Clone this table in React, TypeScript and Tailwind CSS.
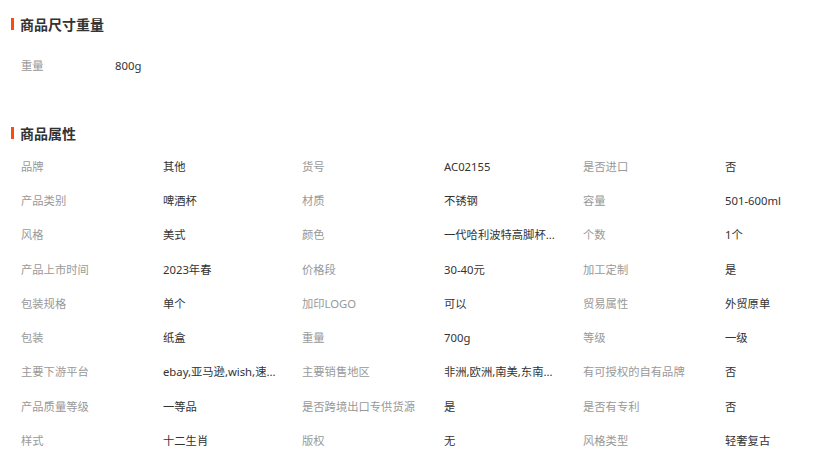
const font = { fontFamily: '"Noto Sans", "Noto Sans CJK SC", sans-serif' };

const attrs: [string, string][] = [
  ['品牌', '其他'],
  ['货号', 'AC02155'],
  ['是否进口', '否'],
  ['产品类别', '啤酒杯'],
  ['材质', '不锈钢'],
  ['容量', '501-600ml'],
  ['风格', '美式'],
  ['颜色', '一代哈利波特高脚杯...'],
  ['个数', '1个'],
  ['产品上市时间', '2023年春'],
  ['价格段', '30-40元'],
  ['加工定制', '是'],
  ['包装规格', '单个'],
  ['加印LOGO', '可以'],
  ['贸易属性', '外贸原单'],
  ['包装', '纸盒'],
  ['重量', '700g'],
  ['等级', '一级'],
  ['主要下游平台', 'ebay,亚马逊,wish,速...'],
  ['主要销售地区', '非洲,欧洲,南美,东南...'],
  ['有可授权的自有品牌', '否'],
  ['产品质量等级', '一等品'],
  ['是否跨境出口专供货源', '是'],
  ['是否有专利', '否'],
  ['样式', '十二生肖'],
  ['版权', '无'],
  ['风格类型', '轻奢复古'],
];

function SectionTitle({ title }: { title: string }) {
  return (
    <div className="flex items-center h-[20px]">
      <span className="ml-[11px] w-[3px] h-[12px] bg-[#ff4a0d]" />
      <h3 className="ml-[6px] text-[14px] font-bold text-[#333]">{title}</h3>
    </div>
  );
}

export default function App() {
  return (
    <div className="w-[840px] h-[458px] overflow-hidden bg-white text-[11.3px]" style={font}>
      <div className="pt-[14px]">
        <SectionTitle title="商品尺寸重量" />
        <div className="mt-[15px] ml-[21px] flex items-center h-[34px]">
          <span className="w-[94px] text-[#999]">重量</span>
          <span className="text-[#333]">800g</span>
        </div>
      </div>
      <div className="mt-[40px]">
        <SectionTitle title="商品属性" />
        <div className="mt-[7px] ml-[21px] grid grid-cols-[142px_139px_142px_139px_142px_94px]">
          {attrs.map(([label, value]) => (
            <div key={label} className="contents">
              <div className="h-[34.3px] flex items-center text-[#999] whitespace-nowrap">{label}</div>
              <div className="h-[34.3px] flex items-center text-[#333] whitespace-nowrap">{value}</div>
            </div>
          ))}
        </div>
      </div>
    </div>
  );
}
